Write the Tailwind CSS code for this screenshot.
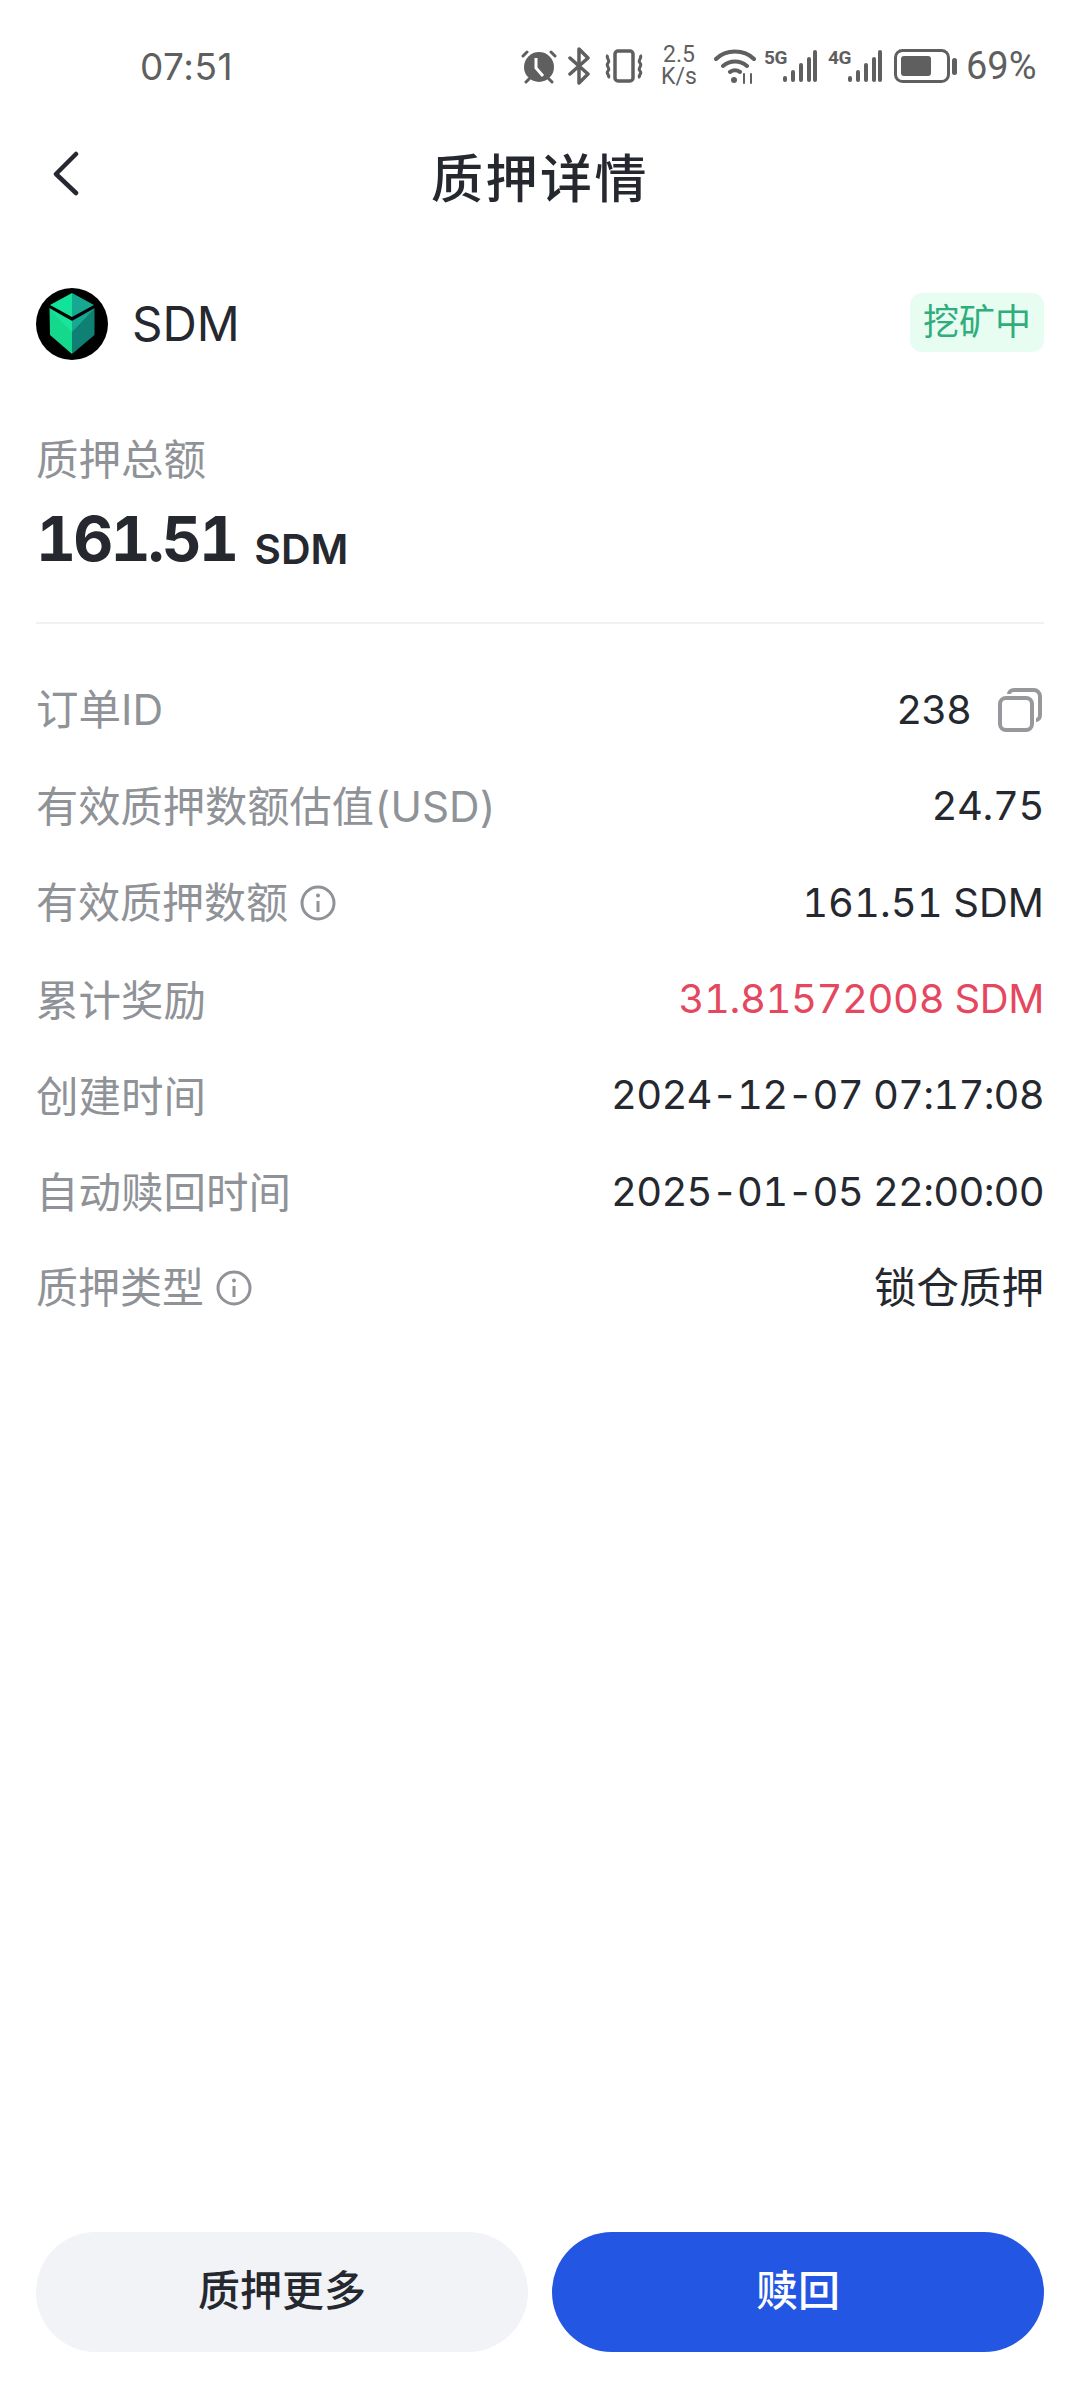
<!DOCTYPE html>
<html lang="zh">
<head>
<meta charset="utf-8">
<script src="https://cdn.jsdelivr.net/npm/@tailwindcss/browser@4"></script>
</head>
<body class="bg-white">
<div class="w-[1080px] h-[2400px] flex flex-col bg-white text-[#25282e] font-['Inter','Noto_Sans_CJK_SC',sans-serif]">

  <!-- status bar -->
  <div class="h-[132px] flex items-center pl-[140px] text-[#5f5f5f]">
    <span class="text-[37px] leading-none w-[380px] tracking-[0.5px]">07:51</span>
    <svg width="38" height="36" viewBox="0 0 38 36" fill="#5f5f5f"><circle cx="19" cy="19" r="15"/><path d="M3 8 7 4M35 8 31 4M9 31l-3 3M29 31l3 3" stroke="#5f5f5f" stroke-width="3" stroke-linecap="round"/><path d="M16 10v10l7 8" stroke="#fff" stroke-width="3" fill="none"/></svg>
    <svg class="ml-[10px]" width="24" height="38" viewBox="0 0 24 38" fill="none" stroke="#5f5f5f" stroke-width="3.500" stroke-linejoin="round" stroke-linecap="round"><path d="M2 11 20 27 11 36V2l9 9L2 27"/></svg>
    <svg class="ml-[12px]" width="40" height="34" viewBox="0 0 40 34" fill="none" stroke="#5f5f5f" stroke-width="3.500"><rect x="11" y="2" width="18" height="30" rx="3"/><path d="M4 6c-3 3 3 5 0 8s3 5 0 8 3 4 0 7M36 6c3 3-3 5 0 8s-3 5 0 8-3 4 0 7" stroke-width="3"/></svg>
    <div class="ml-[16px] w-[38px] flex flex-col items-center text-[23px] leading-[22px] font-['Roboto']"><span>2.5</span><span>K/s</span></div>
    <svg class="ml-[16px]" width="42" height="36" viewBox="0 0 42 36" fill="none" stroke="#5f5f5f" stroke-width="4" stroke-linecap="round"><path d="M2 11C12 1 30 1 40 11M9 18c7-6 17-6 24 0M16 24c3-2 7-2 10 0"/><circle cx="20" cy="32" r="3" fill="#5f5f5f" stroke="none"/><path d="M30 26v9M37 26v9" stroke-width="2"/></svg>
    <div class="ml-[8px] flex items-start h-[34px]">
      <span class="text-[19px] leading-[18px] font-bold font-['Roboto'] tracking-[-0.500px] w-[17px]">5G</span>
      <svg width="36" height="34" viewBox="0 0 36 34" fill="#5f5f5f"><rect x="2" y="27" width="4" height="6" rx="2"/><rect x="10" y="21" width="4" height="12" rx="2"/><rect x="18" y="14" width="4" height="19" rx="2"/><rect x="26" y="8" width="4" height="25" rx="2"/><rect x="32" y="1" width="4" height="32" rx="2"/></svg>
    </div>
    <div class="ml-[11px] flex items-start h-[34px]">
      <span class="text-[19px] leading-[18px] font-bold font-['Roboto'] tracking-[-0.500px] w-[18px]">4G</span>
      <svg width="36" height="34" viewBox="0 0 36 34" fill="#5f5f5f"><rect x="2" y="27" width="4" height="6" rx="2"/><rect x="10" y="21" width="4" height="12" rx="2"/><rect x="18" y="14" width="4" height="19" rx="2"/><rect x="26" y="8" width="4" height="25" rx="2"/><rect x="32" y="1" width="4" height="32" rx="2"/></svg>
    </div>
    <svg class="ml-[12px]" width="63" height="34" viewBox="0 0 63 34" fill="none"><rect x="1.500" y="1.500" width="53" height="31" rx="7" stroke="#5f5f5f" stroke-width="3"/><rect x="7" y="7" width="30" height="20" rx="3" fill="#5f5f5f"/><rect x="58" y="9" width="5" height="17" rx="2.500" fill="#5f5f5f"/></svg>
    <span class="ml-[9px] text-[38px] leading-none font-['Roboto']">69%</span>
  </div>

  <!-- header -->
  <div class="relative h-[92px] flex items-center justify-center pt-[3px]">
    <svg class="absolute left-[52px] top-[19px]" width="28" height="46" viewBox="0 0 28 46" fill="none" stroke="#25282e" stroke-width="4.500" stroke-linecap="round" stroke-linejoin="round"><path d="M24 3 4 23l20 19"/></svg>
    <h1 class="text-[52px] leading-none font-medium tracking-[2.500px]">质押详情</h1>
  </div>

  <div class="px-[36px]">
    <!-- coin row -->
    <div class="mt-[64px] flex items-center justify-between h-[72px]">
      <div class="flex items-center">
        <svg width="72" height="72" viewBox="0 0 72 72"><circle cx="36" cy="36" r="36" fill="#000"/><path d="M36 5 14 17l22 12z" fill="#12e39a"/><path d="M36 5l22 12-22 12z" fill="#17a892"/><path d="M13.500 20 36 33v33L14 47z" fill="#14d98c"/><path d="M14 22l22 22V33z" fill="#18e59b"/><path d="M58.500 20 36 33v33l22.500-19z" fill="#0f8174"/><path d="M58 21 36 44V33z" fill="#17a892"/></svg>
        <span class="ml-[24px] text-[47.500px] leading-none">SDM</span>
      </div>
      <span class="mt-[-4px] w-[134px] h-[59px] rounded-[12px] bg-[#e8fdf2] text-[#2fae7c] text-[36px] flex items-center justify-center">挖矿中</span>
    </div>

    <!-- total -->
    <div class="mt-[72px] text-[42.500px] leading-[56px] text-[#8f9297]">质押总额</div>
    <div class="mt-[24px] h-[68px] flex items-end pb-[10px]">
      <span class="text-[62px] leading-none font-bold tabular-nums tracking-[-2.800px]">161.51</span>
      <span class="ml-[18px] text-[41px] leading-[42px] font-semibold">SDM</span>
    </div>
    <div class="mt-[42px] h-[2px] bg-[#f0f1f3]"></div>

    <!-- rows -->
    <div class="mt-[38px] flex flex-col text-[40px] tabular-nums">
      <div class="h-[96.300px] flex items-center justify-between">
        <span class="text-[#8f9297] text-[42.500px]">订单ID</span>
        <span class="flex items-center"><span class="tracking-[-1px]">238</span><svg class="ml-[27px] mr-[2px]" width="44" height="44" viewBox="0 0 44 44" fill="none" stroke="#96989c" stroke-width="4"><rect x="2" y="10" width="32" height="32" rx="6"/><path d="M11 6c0-2 2-4 5-4h20c3 0 6 3 6 6v19c0 3-2 5-4 5"/></svg></span>
      </div>
      <div class="h-[96.300px] flex items-center justify-between">
        <span class="text-[#8f9297] text-[42.250px]">有效质押数额估值(USD)</span>
        <span class="tracking-[-0.400px]">24.75</span>
      </div>
      <div class="h-[96.300px] flex items-center justify-between">
        <span class="flex items-center text-[#8f9297] text-[42px]"><span>有效质押数额</span><svg class="ml-[12px]" width="36" height="36" viewBox="0 0 36 36" fill="none" stroke="#8f9297" stroke-width="3"><circle cx="18" cy="18" r="16"/><path d="M18 16v11"/><circle cx="18" cy="10.500" r="2" fill="#8f9297" stroke="none"/></svg></span>
        <span>161.51 SDM</span>
      </div>
      <div class="h-[96.300px] flex items-center justify-between">
        <span class="text-[#8f9297] text-[42.500px] pt-[3px]">累计奖励</span>
        <span class="text-[#e5475f] tracking-[-0.400px]">31.81572008 SDM</span>
      </div>
      <div class="h-[96.300px] flex items-center justify-between">
        <span class="text-[#8f9297] text-[42.500px] pt-[3px]">创建时间</span>
        <span class="tracking-[-0.750px]">2024-12-07 07:17:08</span>
      </div>
      <div class="h-[96.300px] flex items-center justify-between">
        <span class="text-[#8f9297] text-[42.500px] pt-[3px]">自动赎回时间</span>
        <span class="tracking-[-0.750px]">2025-01-05 22:00:00</span>
      </div>
      <div class="h-[96.300px] flex items-center justify-between">
        <span class="flex items-center text-[#8f9297] text-[42px]"><span>质押类型</span><svg class="ml-[12px]" width="36" height="36" viewBox="0 0 36 36" fill="none" stroke="#8f9297" stroke-width="3"><circle cx="18" cy="18" r="16"/><path d="M18 16v11"/><circle cx="18" cy="10.500" r="2" fill="#8f9297" stroke="none"/></svg></span>
        <span class="text-[42.500px]">锁仓质押</span>
      </div>
    </div>
  </div>

  <!-- buttons -->
  <div class="mt-auto px-[36px] pb-[48px] flex gap-[24px]">
    <button class="flex-1 h-[120px] rounded-[60px] bg-[#f1f3f6] text-[42px] font-medium text-[#25282e] pb-[3px]">质押更多</button>
    <button class="flex-1 h-[120px] rounded-[60px] bg-[#2356e3] text-[42px] font-medium text-white pb-[3px]">赎回</button>
  </div>
</div>
</body>
</html>
